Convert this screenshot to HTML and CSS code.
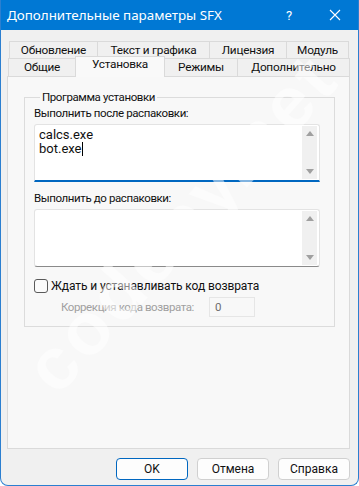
FILE: index.html
```html
<!DOCTYPE html>
<html lang="ru">
<head>
  <meta charset="UTF-8" />
  <title>Дополнительные параметры SFX</title>
  <link rel="stylesheet" href="styles.css">
</head>
<body>

  <div class="window">
    <!-- Title bar -->
    <div class="titlebar">
      <span class="title">Дополнительные параметры SFX</span>
      <span class="tb-help">?</span>
      <span class="tb-close">
        <svg width="12" height="12" viewBox="0 0 12 12"><path d="M1 1L11 11M11 1L1 11" stroke="#fff" stroke-width="1.1"/></svg>
      </span>
    </div>

    <div class="body">
      <!-- Tabs -->
      <div class="tabs">
        <div class="tab-row upper">
          <div class="tab t-upd">Обновление</div>
          <div class="tab t-text">Текст и графика</div>
          <div class="tab t-lic">Лицензия</div>
          <div class="tab t-mod">Модуль</div>
        </div>
        <div class="tab-row lower">
          <div class="tab t-gen">Общие</div>
          <div class="tab t-inst active">Установка</div>
          <div class="tab t-mode">Режимы</div>
          <div class="tab t-adv">Дополнительно</div>
        </div>
      </div>

      <div class="panel">
        <fieldset class="group">
          <legend>Программа установки</legend>

          <div class="label">Выполнить после распаковки:</div>
          <div class="edit focused">
            <div class="edit-text">calcs.exe<br>bot.exe<span class="caret"></span></div>
            <div class="scroll">
              <span class="arr up"></span>
              <span class="arr down"></span>
            </div>
          </div>

          <div class="label second">Выполнить до распаковки:</div>
          <div class="edit">
            <div class="edit-text"></div>
            <div class="scroll">
              <span class="arr up"></span>
              <span class="arr down"></span>
            </div>
          </div>

          <div class="check-row">
            <span class="checkbox"></span>
            <span>Ждать и устанавливать код возврата</span>
          </div>

          <div class="code-row">
            <span class="disabled">Коррекция кода возврата:</span>
            <span class="code-input">0</span>
          </div>
        </fieldset>
      </div>

      <div class="buttons">
        <button class="btn default">OK</button>
        <button class="btn">Отмена</button>
        <button class="btn">Справка</button>
      </div>
    </div>

    <div class="watermark">codeby.net</div>
  </div>

</body>
</html>
```

FILE: styles.css
```css
body {
  margin: 0;
  font-family: Roboto, 'Noto Sans', sans-serif;
  font-size: 11.5px;
  letter-spacing: -0.4px;
  color: #111;
  background: #fff;
}

.window {
  position: relative;
  width: 359px;
  height: 486px;
  box-sizing: border-box;
  border: 1px solid #2b7fd0;
  border-top: none;
  border-radius: 0 0 8px 8px;
  background: #f0f0f0;
  overflow: hidden;
  display: flex;
  flex-direction: column;
}

/* Title bar */
.titlebar {
  height: 30px;
  background: #0078d4;
  color: #fff;
  display: flex;
  align-items: center;
  padding-left: 7px;
  margin: 0 -1px;
  letter-spacing: 0;
}

.title {
  flex: 1;
  font-family: 'Noto Sans', sans-serif;
  font-size: 13.4px;
}

.tb-help {
  width: 46px;
  text-align: center;
  font-size: 13px;
  margin-left: 4px;
}

.tb-close {
  width: 46px;
  display: flex;
  justify-content: center;
  margin-right: 1px;
}

.body {
  flex: 1;
  display: flex;
  flex-direction: column;
  padding: 11px 0 0 6px;
}

/* Tabs */
.tabs {
  display: flex;
  flex-direction: column;
}

.tab-row {
  display: flex;
  height: 17px;
}

.tab-row.upper {
  margin-left: 2px;
}

.tab-row.lower {
  margin-left: 1px;
  height: 18px;
}

.tab {
  box-sizing: border-box;
  border: 1px solid #dadada;
  border-bottom: none;
  margin-right: -1px;
  background: #f0f0f0;
  text-align: center;
  line-height: 17px;
  font-size: 11.8px;
  letter-spacing: -0.25px;
  white-space: nowrap;
}

.t-upd { width: 89px; }
.t-text { width: 113px; }
.t-lic { width: 78px; }
.t-mod { width: 63px; }

.t-gen { width: 68px; }
.t-inst { width: 90px; }
.t-mode { width: 74px; }
.t-adv { width: 113px; }

.tab.active {
  background: #f9f9f9;
  height: 21px;
  margin-top: -2px;
  margin-bottom: -1px;
  position: relative;
  z-index: 1;
  text-align: left;
  padding-left: 16px;
  line-height: 15px;
}

.panel {
  width: 343px;
  height: 373px;
  box-sizing: border-box;
  border: 1px solid #dadada;
  background: #f8f8f8;
  padding: 13px 14px 0 16px;
}

/* Group box */
.group {
  margin: 0;
  height: 237px;
  box-sizing: border-box;
  border: 1px solid #dcdcdc;
  border-radius: 0;
  padding: 1px 14px 0 9px;
}

.group legend {
  padding: 0 2px;
  margin-left: 6px;
  line-height: 14px;
}

.label {
  line-height: 16px;
  margin-bottom: 3px;
  white-space: nowrap;
}

.label.second {
  margin-top: 8px;
}

.edit {
  height: 58px;
  box-sizing: border-box;
  background: #fff;
  border: 1px solid #e3e3e3;
  border-bottom-color: #8a8a8a;
  border-radius: 3px;
  display: flex;
}

.edit.focused {
  border-bottom: 2px solid #0067c0;
  border-radius: 3px 3px 0 0;
}

.edit-text {
  flex: 1;
  padding: 3px 4px;
  line-height: 14px;
  font-size: 13px;
  letter-spacing: 0;
}

.caret {
  display: inline-block;
  width: 1px;
  height: 14px;
  background: #000;
  vertical-align: -3px;
}

.scroll {
  width: 15px;
  margin: 1px 2px 1px 0;
  background: #f0f0f0;
  display: flex;
  flex-direction: column;
  justify-content: space-between;
  align-items: center;
  padding: 5px 0;
}

.arr {
  width: 0;
  height: 0;
  border-left: 4px solid transparent;
  border-right: 4px solid transparent;
}

.arr.up {
  border-bottom: 5px solid #a0a0a0;
}

.arr.down {
  border-top: 5px solid #a0a0a0;
}

.check-row {
  display: flex;
  align-items: center;
  gap: 3px;
  margin-top: 12px;
  font-size: 12px;
  letter-spacing: -0.1px;
  white-space: nowrap;
}

.checkbox {
  width: 12px;
  height: 12px;
  border: 1px solid #5a5a5a;
  border-radius: 3px;
  background: #fbfbfb;
}

.code-row {
  display: flex;
  align-items: center;
  margin-top: 4px;
  padding-left: 27px;
}

.disabled {
  color: #a0a0a0;
  width: 148px;
  white-space: nowrap;
}

.code-input {
  width: 46px;
  height: 20px;
  box-sizing: border-box;
  border: 1px solid #e6e6e6;
  padding-left: 5px;
  line-height: 18px;
  color: #6d6d6d;
}

/* Buttons */
.buttons {
  display: flex;
  justify-content: flex-end;
  gap: 9px;
  padding-right: 8px;
  margin-top: 9px;
}

.btn {
  width: 72px;
  height: 22px;
  box-sizing: border-box;
  font-family: inherit;
  font-size: 12px;
  color: #111;
  background: #fdfdfd;
  border: 1px solid #d0d0d0;
  border-radius: 4px;
  padding: 0;
}

.btn.default {
  border-color: #0067c0;
}

.watermark {
  position: absolute;
  left: -60px;
  top: 180px;
  width: 480px;
  text-align: center;
  font-family: 'Liberation Sans', sans-serif;
  font-weight: bold;
  font-size: 74px;
  letter-spacing: 4px;
  color: rgba(255, 255, 255, 0.5);
  transform: rotate(-48deg);
  pointer-events: none;
}
```
